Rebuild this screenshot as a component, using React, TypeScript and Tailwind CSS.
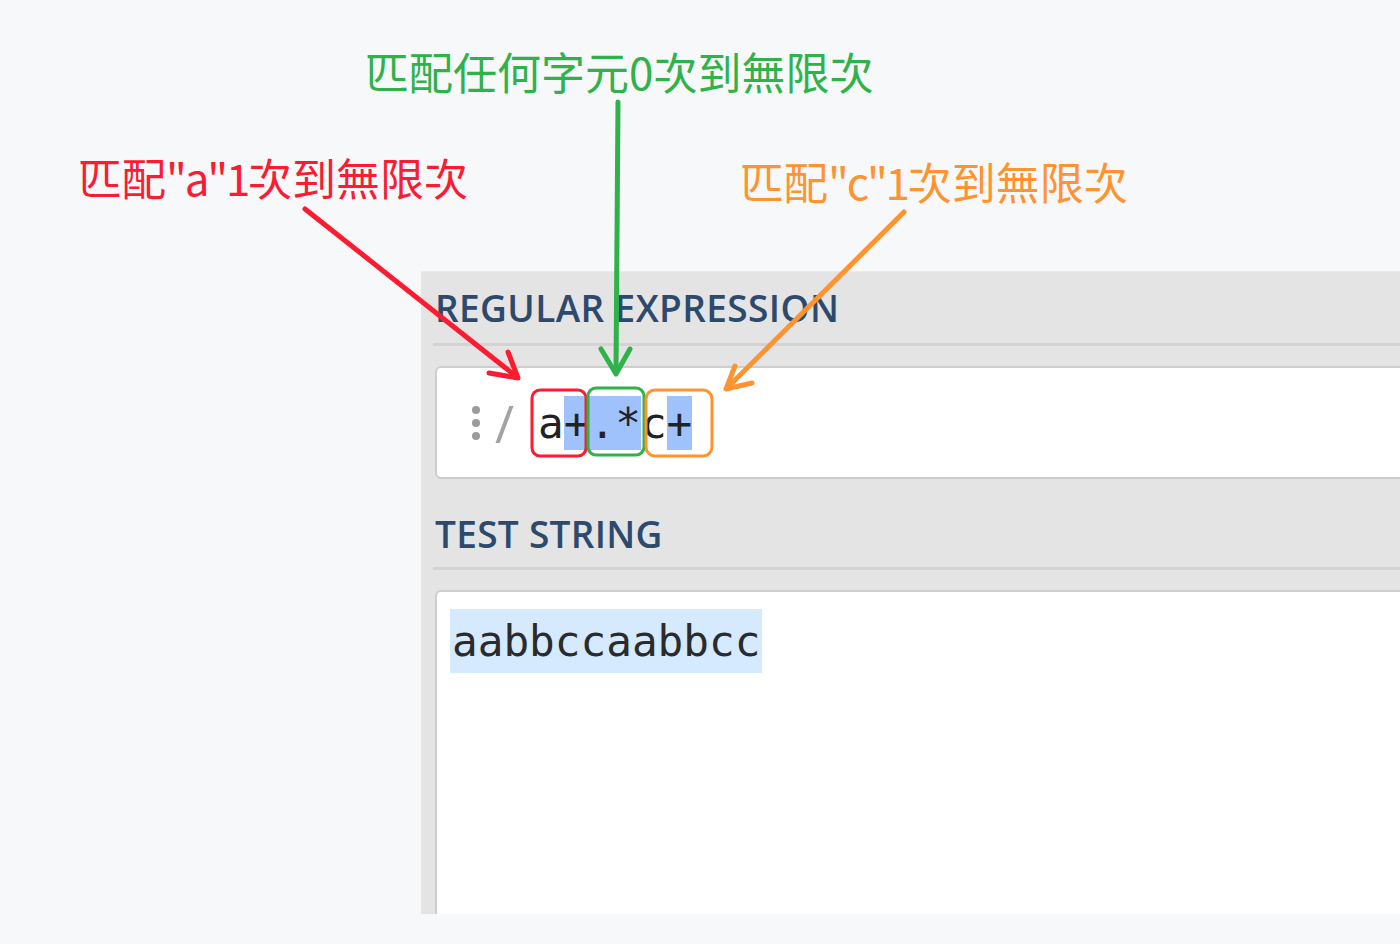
import React from "react";

const mono = { fontFamily: '"DejaVu Sans Mono", "Liberation Mono", monospace' };
const cjk = { fontFamily: '"Noto Sans CJK TC", "Noto Sans", sans-serif' };
const head = { fontFamily: '"Open Sans", "Noto Sans", sans-serif' };

export default function App() {
  return (
    <div className="relative w-[1400px] h-[944px] overflow-hidden bg-[#f7f8fa]">
      {/* Panel */}
      <div className="ml-[421px] mt-[271px] h-[643px] w-[990px] bg-[#e4e4e4] border-t border-[#ebebeb] pl-[12px] flex flex-col">
        <div
          className="mt-[17px] ml-[2px] h-[37px] leading-[37px] text-[37px] font-semibold text-[#2d4a6d] tracking-[0.4px]"
          style={head}
        >
          REGULAR EXPRESSION
        </div>
        <div className="mt-[17px] h-[3px] bg-[#d3d3d3]" />
        <div className="mt-[20px] ml-[2px] h-[113px] bg-white border-2 border-[#cdcdcd] rounded-[6px] flex items-center pl-[34px]">
          <svg width="10" height="34" viewBox="0 0 10 34" className="shrink-0">
            <circle cx="5" cy="4" r="4" fill="#9b9b9b" />
            <circle cx="5" cy="17" r="4" fill="#9b9b9b" />
            <circle cx="5" cy="30" r="4" fill="#9b9b9b" />
          </svg>
          <span className="ml-[14px] text-[52px] leading-[54px] text-[#a3a3a3]" style={head}>
            /
          </span>
          <span className="ml-[24px] flex text-[42.7px] leading-[54px] text-[#222]" style={mono}>
            <span className="h-[54px]">a</span>
            <span className="h-[54px] bg-[#9fc2fc]">+</span>
            <span className="h-[54px] bg-[#9fc2fc]">.*</span>
            <span className="h-[54px]">c</span>
            <span className="h-[54px] bg-[#9fc2fc]">+</span>
          </span>
        </div>
        <div
          className="mt-[36px] ml-[2px] h-[37px] leading-[37px] text-[37px] font-semibold text-[#2d4a6d] tracking-[0.3px]"
          style={head}
        >
          TEST STRING
        </div>
        <div className="mt-[15px] h-[3px] bg-[#d3d3d3]" />
        <div className="mt-[20px] ml-[2px] flex-1 bg-white border-2 border-b-0 border-[#cdcdcd] rounded-t-[6px] pl-[13px] pt-[17px]">
          <span
            className="inline-block h-[64px] leading-[64px] px-[2px] bg-[#d5e9ff] text-[42.7px] text-[#2b2b2b]"
            style={mono}
          >
            aabbccaabbcc
          </span>
        </div>
      </div>

      {/* Annotation labels */}
      <div className="absolute left-[365px] top-[45px] text-[44px] leading-[52px] text-[#2fb24a] whitespace-nowrap" style={cjk}>
        匹配任何字元0次到無限次
      </div>
      <div className="absolute left-[78px] top-[151px] text-[44px] leading-[52px] text-[#fb1c31] whitespace-nowrap" style={cjk}>
        匹配<span className="tracking-[-2.2px]">"a"1</span>次到無限次
      </div>
      <div className="absolute left-[740px] top-[155px] text-[44px] leading-[52px] text-[#ff932f] whitespace-nowrap" style={cjk}>
        匹配<span className="tracking-[-2.2px]">"c"1</span>次到無限次
      </div>

      {/* Annotation drawings */}
      <svg className="absolute left-0 top-0 pointer-events-none" width="1400" height="944" viewBox="0 0 1400 944">
        <g fill="none" strokeLinecap="round" strokeLinejoin="round">
          <g stroke="#fb1c31" strokeWidth="5">
            <line x1="305" y1="209" x2="517" y2="377" />
            <polyline points="489,373 518,378 508,352" />
          </g>
          <g stroke="#2fb24a" strokeWidth="5">
            <line x1="618" y1="102" x2="616" y2="372" />
            <polyline points="601,349 616,374 630,349" />
          </g>
          <g stroke="#ff932f" strokeWidth="5">
            <line x1="904" y1="212" x2="727" y2="388" />
            <polyline points="735,366 726,389 752,383" />
          </g>
          <rect x="532" y="390" width="54" height="66" rx="8" stroke="#fb1c31" strokeWidth="3" />
          <rect x="588" y="388" width="56" height="67" rx="8" stroke="#2fb24a" strokeWidth="3" />
          <rect x="646" y="390" width="66" height="66" rx="9" stroke="#ff932f" strokeWidth="3" />
        </g>
      </svg>
    </div>
  );
}
